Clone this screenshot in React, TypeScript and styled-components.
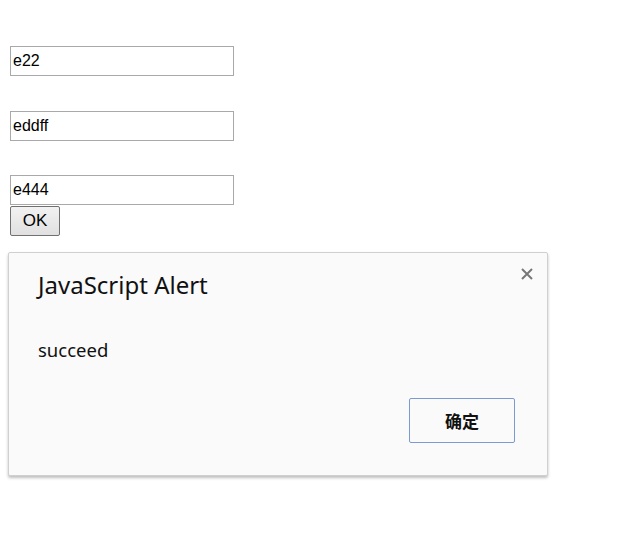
import React from 'react';
import styled, { createGlobalStyle } from 'styled-components';

const GlobalStyle = createGlobalStyle`
  html, body {
    margin: 0;
    padding: 0;
    background: #fff;
  }
`;

const Page = styled.div`
  position: relative;
  width: 631px;
  height: 553px;
  padding: 46px 0 0 10px;
  box-sizing: border-box;
  font-family: 'Liberation Sans', Arial, sans-serif;
`;

const Form = styled.form`
  display: flex;
  flex-direction: column;
  align-items: flex-start;
`;

const Field = styled.input<{ $gap?: number }>`
  width: 224px;
  height: 30px;
  box-sizing: border-box;
  margin: 0 0 ${(p) => p.$gap ?? 0}px;
  padding: 1px 2px;
  border: 1px solid #a9a9a9;
  font-family: 'Liberation Sans', Arial, sans-serif;
  font-size: 16px;
  color: #000;
  background: #fff;
  outline: none;
`;

const OkButton = styled.button`
  width: 50px;
  height: 30px;
  margin-top: 1px;
  padding: 0;
  box-sizing: border-box;
  border: 1px solid #707070;
  border-radius: 2px;
  background: linear-gradient(#f2f2f2, #e0e0e0);
  font-family: 'Liberation Sans', Arial, sans-serif;
  font-size: 17px;
  color: #000;
`;

const Dialog = styled.div`
  position: absolute;
  left: 8px;
  top: 252px;
  width: 540px;
  height: 224px;
  box-sizing: border-box;
  background: #fafafa;
  border: 1px solid #d0d0d0;
  border-radius: 2px;
  box-shadow: 0 2px 3px rgba(0, 0, 0, 0.25);
  padding: 16px 32px 32px 29px;
  display: flex;
  flex-direction: column;
  font-family: 'Noto Sans', 'Noto Sans CJK SC', sans-serif;
  color: #111;
`;

const Title = styled.div`
  font-size: 24px;
  line-height: 32px;
`;

const Message = styled.div`
  margin-top: 37px;
  font-size: 18.5px;
  line-height: 24px;
`;

const Actions = styled.div`
  margin-top: auto;
  display: flex;
  justify-content: flex-end;
`;

const ConfirmButton = styled.button`
  width: 106px;
  height: 45px;
  box-sizing: border-box;
  border: 1px solid #7b9ad1;
  border-radius: 2px;
  background: #fafafa;
  font-family: 'Noto Sans CJK SC', sans-serif;
  font-weight: 700;
  font-size: 17px;
  color: #111;
`;

const Close = styled.span`
  position: absolute;
  right: 12px;
  top: 13px;
  width: 16px;
  height: 16px;
  display: flex;
  align-items: center;
  justify-content: center;
`;

const App = () => {
  return (
    <>
      <GlobalStyle />
      <Page>
        <Form>
          <Field defaultValue='e22' $gap={35} />
          <Field defaultValue='eddff' $gap={34} />
          <Field defaultValue='e444' />
          <OkButton type='button'>OK</OkButton>
        </Form>
        <Dialog>
          <Close>
            <svg width='12' height='12' viewBox='0 0 12 12'>
              <path d='M1 1 L11 11 M11 1 L1 11' stroke='#777' strokeWidth='2' />
            </svg>
          </Close>
          <Title>JavaScript Alert</Title>
          <Message>succeed</Message>
          <Actions>
            <ConfirmButton type='button'>确定</ConfirmButton>
          </Actions>
        </Dialog>
      </Page>
    </>
  );
};

export default App;
